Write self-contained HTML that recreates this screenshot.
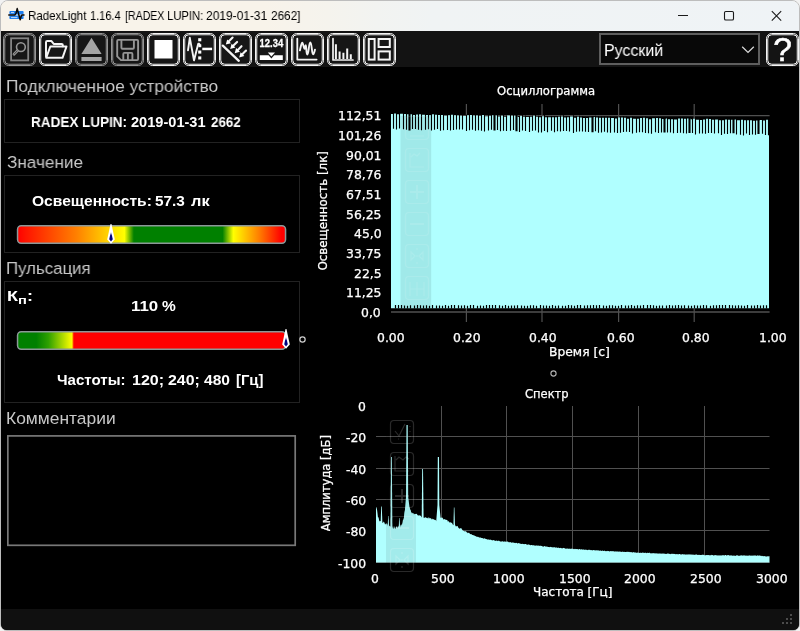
<!DOCTYPE html>
<html lang="ru">
<head>
<meta charset="utf-8">
<title>RadexLight 1.16.4 [RADEX LUPIN: 2019-01-31 2662]</title>
<style>
html,body{margin:0;padding:0;background:#f2f2f2;}
body{width:800px;height:631px;overflow:hidden;position:relative;font-family:"Liberation Sans",sans-serif;}
#win{position:absolute;left:0;top:0;width:798px;height:629px;border:1px solid #bdbdbd;border-radius:8px 8px 7px 7px;overflow:hidden;background:linear-gradient(180deg,#f8f3ea 0,#f8f3ea 30px,#000 30px,#000 100%);}
#inner{position:absolute;left:-1px;top:-1px;width:800px;height:631px;}
.abs{position:absolute;}
svg{will-change:transform;}
.c{-webkit-text-stroke:0.25px #fff;}
.t{position:absolute;white-space:nowrap;transform-origin:0 50%;display:inline-block;will-change:transform;}
#titlebar{position:absolute;left:0;top:0;width:800px;height:31px;background:linear-gradient(90deg,#f8f3ea 0%,#f8f3ea 33%,#f5f3ed 41%,#f2f3f1 47%,#f0f3f4 54%,#eff3f6 100%);}
#toolbar{position:absolute;left:0;top:31px;width:800px;height:36px;background:#131313;}
.tb{position:absolute;}
.box{position:absolute;box-sizing:border-box;border:1px solid #222;}
.bar{position:absolute;box-sizing:border-box;border:1px solid #8a8a8a;border-radius:4px;}
#status{position:absolute;left:0;top:609px;width:800px;height:22px;background:#101010;}
.dot{position:absolute;width:2px;height:2px;background:#4c4c4c;}
</style>
</head>
<body>
<div id="win"><div id="inner">

<div id="titlebar">
<svg class="abs" style="left:8px;top:7px" width="18" height="16" viewBox="8 7 18 16">
<rect x="9.4" y="11.1" width="14.2" height="3" rx="0.8" fill="#1b7df0"/>
<rect x="9.4" y="15.9" width="14.2" height="3.2" rx="0.8" fill="#1b7df0"/>
<rect x="9.4" y="13.6" width="14.2" height="3" fill="#3d8ff0" opacity="0.55"/>
<path d="M11 12.6 H14 M11 17.6 H17.4" stroke="#d6e8ff" stroke-width="0.9"/>
<path d="M8.8 15 H14.8 L16 13.4 L17.2 8.6 L18.6 14 L20.2 19.8 L21.4 15.6 L22 15 H24" fill="none" stroke="#0a0a0a" stroke-width="1.5" stroke-linejoin="round" stroke-linecap="round"/>
</svg>
<svg class="abs" style="left:670px;top:5px" width="124" height="22" viewBox="0 0 124 22">
<path d="M8 10.5 H18" stroke="#1a1a1a" stroke-width="1"/>
<rect x="54.5" y="6.5" width="9" height="8.5" rx="1.3" fill="none" stroke="#1a1a1a" stroke-width="1.1"/>
<path d="M101.8 6.2 L111.2 15.6 M111.2 6.2 L101.8 15.6" stroke="#1a1a1a" stroke-width="1.1"/>
</svg>
</div>

<div id="toolbar"></div>
<svg class="tb" style="left:3px;top:33px" width="33" height="33" viewBox="0 0 33 33"><rect x="0.5" y="0.5" width="32" height="32" rx="5.2" fill="#161616" stroke="#969696" stroke-width="1"/><rect x="1.75" y="1.75" width="29.5" height="29.5" rx="4" fill="none" stroke="#969696" stroke-width="1"/><g stroke="#969696" fill="none" stroke-width="1.6" stroke-linecap="round" stroke-linejoin="round"><rect x="8.1" y="5.3" width="17.1" height="22.1" stroke-width="1.8" stroke="#848484" stroke-linejoin="miter"/><circle cx="17.9" cy="14.1" r="4.4" stroke-width="1.6"/><path d="M14.4 17.7 L11 21.3" stroke-width="2.7"/><path d="M14.2 17.9 L11.2 21.1" stroke-width="0.9" stroke="#3a3a3a"/></g></svg>
<svg class="tb" style="left:39px;top:33px" width="33" height="33" viewBox="0 0 33 33"><rect x="0.5" y="0.5" width="32" height="32" rx="5.2" fill="#161616" stroke="#f4f4f4" stroke-width="1"/><rect x="1.75" y="1.75" width="29.5" height="29.5" rx="4" fill="none" stroke="#f4f4f4" stroke-width="1"/><g stroke="#f4f4f4" fill="none" stroke-width="1.6" stroke-linecap="round" stroke-linejoin="round"><path d="M7 23.6 V9.3 Q7 8.1 8.2 8.1 H12.5 L14.7 10.9 H22.6 Q23.8 10.9 23.8 12.1 V13.2" stroke-width="2"/><path d="M7.2 24.8 L11.3 13.5 H27.5 L23.5 24.8 Z" stroke-width="2"/></g></svg>
<svg class="tb" style="left:75px;top:33px" width="33" height="33" viewBox="0 0 33 33"><rect x="0.5" y="0.5" width="32" height="32" rx="5.2" fill="#161616" stroke="#969696" stroke-width="1"/><rect x="1.75" y="1.75" width="29.5" height="29.5" rx="4" fill="none" stroke="#969696" stroke-width="1"/><g stroke="#969696" fill="none" stroke-width="1.6" stroke-linecap="round" stroke-linejoin="round"><path d="M16.5 4.8 L26.6 21 H6.4 Z" fill="#a4a4a4" stroke="none"/><rect x="6.4" y="24" width="20.2" height="4" fill="#a4a4a4" stroke="none"/></g></svg>
<svg class="tb" style="left:111px;top:33px" width="33" height="33" viewBox="0 0 33 33"><rect x="0.5" y="0.5" width="32" height="32" rx="5.2" fill="#161616" stroke="#969696" stroke-width="1"/><rect x="1.75" y="1.75" width="29.5" height="29.5" rx="4" fill="none" stroke="#969696" stroke-width="1"/><g stroke="#969696" fill="none" stroke-width="1.6" stroke-linecap="round" stroke-linejoin="round"><path d="M7.2 6.9 H26.1 Q27.1 6.9 27.1 7.9 V26.1 Q27.1 27.1 26.1 27.1 H10 L6.2 23.4 V7.9 Q6.2 6.9 7.2 6.9 Z" stroke-width="1.9"/><path d="M10.4 7.4 V14.7 Q10.4 15.7 11.4 15.7 H21.9 Q22.9 15.7 22.9 14.7 V7.4" stroke-width="1.9"/><path d="M12.3 26.6 V20.9 Q12.3 19.9 13.3 19.9 H20.4 Q21.4 19.9 21.4 20.9 V26.6 M16.9 21 V26.4" stroke-width="1.9"/></g></svg>
<svg class="tb" style="left:147px;top:33px" width="33" height="33" viewBox="0 0 33 33"><rect x="0.5" y="0.5" width="32" height="32" rx="5.2" fill="#161616" stroke="#f4f4f4" stroke-width="1"/><rect x="1.75" y="1.75" width="29.5" height="29.5" rx="4" fill="none" stroke="#f4f4f4" stroke-width="1"/><g stroke="#f4f4f4" fill="none" stroke-width="1.6" stroke-linecap="round" stroke-linejoin="round"><rect x="7.5" y="7" width="18" height="18.5" fill="#fff" stroke="none"/></g></svg>
<svg class="tb" style="left:183px;top:33px" width="33" height="33" viewBox="0 0 33 33"><rect x="0.5" y="0.5" width="32" height="32" rx="5.2" fill="#161616" stroke="#f4f4f4" stroke-width="1"/><rect x="1.75" y="1.75" width="29.5" height="29.5" rx="4" fill="none" stroke="#f4f4f4" stroke-width="1"/><g stroke="#f4f4f4" fill="none" stroke-width="1.6" stroke-linecap="round" stroke-linejoin="round"><path d="M5 17.3 L6.8 4.8 L11 27.4 L15.1 11.2 Q15.9 9.6 17 12.2" stroke-width="1.9"/><g fill="#fff" stroke="none"><rect x="15.2" y="5.2" width="3.1" height="3.1"/><rect x="15.4" y="11.4" width="2.9" height="2.8"/><rect x="15.2" y="17.5" width="3.1" height="3.1"/><rect x="15.2" y="23.4" width="3.1" height="3.1"/><rect x="19.3" y="14.7" width="9.8" height="2.5"/></g></g></svg>
<svg class="tb" style="left:219px;top:33px" width="33" height="33" viewBox="0 0 33 33"><rect x="0.5" y="0.5" width="32" height="32" rx="5.2" fill="#161616" stroke="#f4f4f4" stroke-width="1"/><rect x="1.75" y="1.75" width="29.5" height="29.5" rx="4" fill="none" stroke="#f4f4f4" stroke-width="1"/><g stroke="#f4f4f4" fill="none" stroke-width="1.6" stroke-linecap="round" stroke-linejoin="round"><path d="M3.8 12.6 L19.8 27.8" stroke-width="2.3"/><path d="M13.6 4.6 L9.4 8.8" stroke-width="2.1"/><path d="M6.8 11.6 L8.2 6.4 L12.0 10.2 Z" fill="#fff" stroke="none"/><path d="M18.1 8.9 L13.9 13.1" stroke-width="2.1"/><path d="M11.2 15.9 L12.6 10.7 L16.4 14.5 Z" fill="#fff" stroke="none"/><path d="M22.5 13.2 L18.3 17.4" stroke-width="2.1"/><path d="M15.7 20.2 L17.1 15.0 L20.9 18.8 Z" fill="#fff" stroke="none"/><path d="M27.0 17.5 L22.8 21.7" stroke-width="2.1"/><path d="M20.2 24.5 L21.6 19.3 L25.4 23.1 Z" fill="#fff" stroke="none"/></g></svg>
<svg class="tb" style="left:255px;top:33px" width="33" height="33" viewBox="0 0 33 33"><rect x="0.5" y="0.5" width="32" height="32" rx="5.2" fill="#161616" stroke="#f4f4f4" stroke-width="1"/><rect x="1.75" y="1.75" width="29.5" height="29.5" rx="4" fill="none" stroke="#f4f4f4" stroke-width="1"/><g stroke="#f4f4f4" fill="none" stroke-width="1.6" stroke-linecap="round" stroke-linejoin="round"><text x="16.4" y="13.8" text-anchor="middle" font-family="'Liberation Sans', sans-serif" font-weight="700" font-size="10" fill="#fff" stroke="#fff" stroke-width="0.3" textLength="23.6" lengthAdjust="spacingAndGlyphs">12.34</text><path d="M4.8 22.3 H27.8 V27 H4.8 Z M13.6 22.3 L16.4 25.4 L19.2 22.3 Z" fill="#fff" fill-rule="evenodd" stroke="none"/><path d="M12.8 19.6 H20 L16.4 23.4 Z" fill="#fff" stroke="none"/></g></svg>
<svg class="tb" style="left:291px;top:33px" width="33" height="33" viewBox="0 0 33 33"><rect x="0.5" y="0.5" width="32" height="32" rx="5.2" fill="#161616" stroke="#f4f4f4" stroke-width="1"/><rect x="1.75" y="1.75" width="29.5" height="29.5" rx="4" fill="none" stroke="#f4f4f4" stroke-width="1"/><g stroke="#f4f4f4" fill="none" stroke-width="1.6" stroke-linecap="round" stroke-linejoin="round"><path d="M6.3 5.6 V26.6 H25.6" stroke-width="1.8"/><path d="M8.9 17.4 C9.8 14 10.4 9.6 11.3 9.6 C12.2 9.6 12.7 15.8 13.5 15.8 C14.1 15.8 14.1 12.2 14.7 12.2 C15.6 12.2 15 21.6 16.3 21.6 C17.8 21.6 17.7 9.4 19.3 9.4 C20.9 9.4 20.7 21.2 22.1 21.2 C23 21.2 23.5 18.4 24 16.6" stroke-width="1.9"/></g></svg>
<svg class="tb" style="left:327px;top:33px" width="33" height="33" viewBox="0 0 33 33"><rect x="0.5" y="0.5" width="32" height="32" rx="5.2" fill="#161616" stroke="#f4f4f4" stroke-width="1"/><rect x="1.75" y="1.75" width="29.5" height="29.5" rx="4" fill="none" stroke="#f4f4f4" stroke-width="1"/><g stroke="#f4f4f4" fill="none" stroke-width="1.6" stroke-linecap="round" stroke-linejoin="round"><path d="M6 5.6 V27 H26" stroke-width="1.7"/><path d="M8.9 11.3 V26 M12.6 18.4 V26 M16.4 19.8 V26 M20.2 15.5 V26 M23.8 21.3 V26" stroke-width="2" stroke-linecap="butt"/></g></svg>
<svg class="tb" style="left:363px;top:33px" width="33" height="33" viewBox="0 0 33 33"><rect x="0.5" y="0.5" width="32" height="32" rx="5.2" fill="#161616" stroke="#f4f4f4" stroke-width="1"/><rect x="1.75" y="1.75" width="29.5" height="29.5" rx="4" fill="none" stroke="#f4f4f4" stroke-width="1"/><g stroke="#f4f4f4" fill="none" stroke-width="1.6" stroke-linecap="round" stroke-linejoin="round"><g stroke-width="2" stroke-linejoin="miter"><rect x="5.8" y="6" width="5.8" height="20.6"/><rect x="15.6" y="6" width="11.2" height="8"/><rect x="15.6" y="18.4" width="11.2" height="8.2"/></g></g></svg>
<div class="abs" style="left:599px;top:33px;width:161px;height:32px;box-sizing:border-box;border:2px solid #5e5e5e;background:#080808"></div>
<svg class="abs" style="left:740.4px;top:43.6px" width="16" height="11" viewBox="0 0 16 11"><path d="M2.2 2.8 L8 8.4 L13.8 2.8" fill="none" stroke="#d8d8d8" stroke-width="1.3"/></svg>
<svg class="abs" style="left:765.6px;top:33px" width="33" height="33" viewBox="0 0 33 33">
<rect x="0.5" y="0.5" width="32" height="32" rx="5.2" fill="#141414" stroke="#f4f4f4"/>
<rect x="1.75" y="1.75" width="29.5" height="29.5" rx="4" fill="none" stroke="#f4f4f4"/>
<text x="16.6" y="28.2" text-anchor="middle" font-family="'Liberation Sans', sans-serif" font-size="33.5" fill="#fff" stroke="#fff" stroke-width="0.5">?</text>
</svg>

<div class="box" style="left:4px;top:99px;width:296px;height:44px"></div>
<div class="box" style="left:4px;top:175px;width:296px;height:78px"></div>
<div class="box" style="left:4px;top:281px;width:296px;height:122px"></div>

<svg class="abs" style="left:16px;top:224px" width="272" height="21" viewBox="0 0 272 21"><defs><linearGradient id="g1" x1="0" y1="0" x2="1" y2="0"><stop offset="0" stop-color="#ff0000"/><stop offset="0.03" stop-color="#ff1400"/><stop offset="0.22" stop-color="#ff8000"/><stop offset="0.399" stop-color="#ffff00"/><stop offset="0.434" stop-color="#008000"/><stop offset="0.765" stop-color="#008000"/><stop offset="0.805" stop-color="#ffff00"/><stop offset="0.9" stop-color="#ff8000"/><stop offset="0.985" stop-color="#ff0000"/></linearGradient></defs><rect x="1.55" y="1.85" width="268" height="17.3" rx="3.6" fill="url(#g1)" stroke="#8c9898" stroke-width="1.5"/></svg>
<svg class="abs" style="left:106.3px;top:223.5px" width="10" height="21" viewBox="0 0 10 21"><defs><linearGradient id="mk111" x1="0" y1="0" x2="0" y2="1"><stop offset="0" stop-color="#ffffff"/><stop offset="0.35" stop-color="#000080"/><stop offset="1" stop-color="#000080"/></linearGradient></defs><path d="M4.55 0 L5.45 0 L8.8 15.4 L5 19.8 L1.2 15.4 Z" fill="#fff"/><path d="M5 7.6 L6.8 15.2 L5 17.4 L3.2 15.2 Z" fill="url(#mk111)"/></svg>
<svg class="abs" style="left:16px;top:330px" width="272" height="21" viewBox="0 0 272 21"><defs><linearGradient id="g2" x1="0" y1="0" x2="1" y2="0"><stop offset="0" stop-color="#008000"/><stop offset="0.07" stop-color="#008000"/><stop offset="0.115" stop-color="#2ea000"/><stop offset="0.203" stop-color="#ffff00"/><stop offset="0.21" stop-color="#ff0000"/><stop offset="1" stop-color="#ff0000"/></linearGradient></defs><rect x="1.55" y="1.85" width="268" height="17.3" rx="3.6" fill="url(#g2)" stroke="#8c9898" stroke-width="1.5"/></svg>
<svg class="abs" style="left:281.3px;top:329.2px" width="10" height="21" viewBox="0 0 10 21"><defs><linearGradient id="mk286" x1="0" y1="0" x2="0" y2="1"><stop offset="0" stop-color="#ffffff"/><stop offset="0.35" stop-color="#000080"/><stop offset="1" stop-color="#000080"/></linearGradient></defs><path d="M4.55 0 L5.45 0 L8.8 15.4 L5 19.8 L1.2 15.4 Z" fill="#fff"/><path d="M5 7.6 L6.8 15.2 L5 17.4 L3.2 15.2 Z" fill="url(#mk286)"/></svg>
<svg class="abs" style="left:298.1px;top:335.3px" width="9" height="9" viewBox="0 0 9 9"><circle cx="4.5" cy="4.5" r="2.65" fill="#000" stroke="#d0d0d0" stroke-width="1.2"/></svg>
<svg class="abs" style="left:548.5px;top:369px" width="9" height="9" viewBox="0 0 9 9"><circle cx="4.5" cy="4.5" r="2.6" fill="#000" stroke="#b4b4b4" stroke-width="1.1"/></svg>

<svg class="abs" style="left:0;top:430px" width="304" height="122" viewBox="0 430 304 122"><rect x="7.85" y="435.9" width="287.35" height="109.4" fill="#000" stroke="#787878" stroke-width="1.7"/></svg>

<svg class="abs" style="left:0;top:67px" width="800" height="542" viewBox="0 67 800 542">
<path d="M391 115.6 H769.6 M391 312 H769.6" stroke="#505050" stroke-width="1.3"/>
<path d="M466.4 104 V322" stroke="#505050" stroke-width="1.2"/>
<path d="M542.0 104 V322" stroke="#505050" stroke-width="1.2"/>
<path d="M618.6 104 V322" stroke="#505050" stroke-width="1.2"/>
<path d="M694.2 104 V322" stroke="#505050" stroke-width="1.2"/>
<path d="M391.00 308.3 L391.00 113.90 L394.06 113.90 L394.06 113.60 L397.06 113.60 L397.06 114.26 L400.06 114.26 L400.06 113.73 L404.06 113.73 L404.06 113.97 L407.06 113.97 L407.06 114.26 L410.55 114.26 L410.55 114.16 L413.06 114.16 L413.06 114.95 L416.06 114.95 L416.06 114.38 L419.06 114.38 L419.06 114.20 L422.06 114.20 L422.06 114.79 L426.06 114.79 L426.06 115.00 L429.06 115.00 L429.06 115.30 L432.06 115.30 L432.06 114.29 L435.06 114.29 L435.06 114.86 L438.06 114.86 L438.06 115.03 L441.06 115.03 L441.06 115.11 L444.06 115.11 L444.06 115.66 L448.06 115.66 L448.06 115.37 L451.06 115.37 L451.06 114.84 L454.06 114.84 L454.06 115.14 L457.06 115.14 L457.06 115.62 L460.06 115.62 L460.06 115.82 L463.06 115.82 L463.06 115.89 L467.06 115.89 L467.06 115.28 L470.06 115.28 L470.06 114.97 L473.06 114.97 L473.06 115.49 L476.06 115.49 L476.06 115.45 L479.06 115.45 L479.06 115.88 L482.06 115.88 L482.06 115.04 L485.06 115.04 L485.06 116.13 L489.06 116.13 L489.06 115.96 L492.06 115.96 L492.06 115.35 L495.55 115.35 L495.55 115.39 L498.06 115.39 L498.06 116.45 L501.06 116.45 L501.06 115.77 L504.06 115.77 L504.06 116.72 L507.06 116.72 L507.06 115.53 L511.06 115.53 L511.06 115.66 L514.06 115.66 L514.06 115.70 L517.55 115.70 L517.55 116.91 L520.06 116.91 L520.06 116.11 L523.06 116.11 L523.06 116.74 L526.06 116.74 L526.06 117.08 L530.06 117.08 L530.06 116.79 L533.06 116.79 L533.06 115.85 L536.06 115.85 L536.06 116.83 L539.06 116.83 L539.06 117.29 L542.06 117.29 L542.06 116.28 L545.06 116.28 L545.06 117.28 L548.06 117.28 L548.06 117.19 L552.06 117.19 L552.06 117.22 L555.06 117.22 L555.06 117.28 L558.06 117.28 L558.06 116.78 L561.06 116.78 L561.06 116.52 L564.06 116.52 L564.06 117.46 L567.06 117.46 L567.06 117.30 L570.06 117.30 L570.06 116.45 L574.06 116.45 L574.06 117.79 L577.06 117.79 L577.06 116.84 L580.06 116.84 L580.06 117.41 L583.06 117.41 L583.06 117.92 L586.06 117.92 L586.06 117.96 L589.06 117.96 L589.06 117.49 L593.55 117.49 L593.55 117.06 L596.06 117.06 L596.06 117.52 L599.06 117.52 L599.06 117.63 L602.06 117.63 L602.06 117.74 L605.06 117.74 L605.06 117.72 L608.06 117.72 L608.06 117.69 L611.06 117.69 L611.06 118.09 L615.06 118.09 L615.06 118.49 L618.06 118.49 L618.06 117.59 L621.06 117.59 L621.06 117.47 L624.06 117.47 L624.06 117.66 L627.06 117.66 L627.06 118.64 L630.06 118.64 L630.06 117.63 L633.06 117.63 L633.06 118.82 L637.06 118.82 L637.06 118.70 L640.06 118.70 L640.06 118.06 L643.06 118.06 L643.06 117.67 L646.06 117.67 L646.06 118.16 L649.06 118.16 L649.06 119.13 L652.06 119.13 L652.06 118.17 L656.06 118.17 L656.06 118.03 L659.06 118.03 L659.06 118.27 L662.06 118.27 L662.06 118.94 L665.55 118.94 L665.55 118.61 L668.06 118.61 L668.06 119.18 L671.06 119.18 L671.06 119.32 L674.06 119.32 L674.06 119.46 L678.06 119.46 L678.06 118.55 L681.06 118.55 L681.06 118.55 L684.06 118.55 L684.06 118.73 L687.06 118.73 L687.06 118.40 L690.55 118.40 L690.55 119.20 L693.06 119.20 L693.06 118.63 L696.06 118.63 L696.06 119.70 L700.06 119.70 L700.06 119.96 L703.06 119.96 L703.06 119.53 L706.06 119.53 L706.06 118.87 L709.06 118.87 L709.06 118.97 L712.06 118.97 L712.06 119.74 L715.06 119.74 L715.06 119.49 L719.06 119.49 L719.06 120.25 L722.06 120.25 L722.06 120.31 L725.06 120.31 L725.06 119.54 L728.06 119.54 L728.06 119.77 L731.06 119.77 L731.06 119.67 L734.55 119.67 L734.55 119.49 L737.06 119.49 L737.06 120.14 L741.06 120.14 L741.06 119.73 L744.06 119.73 L744.06 120.22 L747.06 120.22 L747.06 120.25 L750.06 120.25 L750.06 120.16 L753.06 120.16 L753.06 120.64 L756.06 120.64 L756.06 120.50 L759.55 120.50 L759.55 120.09 L763.06 120.09 L763.06 120.52 L766.06 120.52 L766.06 119.69 L769.00 119.69 L769.00 120.45 L769.00 120.45 L769.00 308.3 Z" fill="#b0ffff"/>
<path d="M392.94 112.70 V128.65 H394.06 V112.70 Z M395.94 112.40 V129.51 H397.06 V112.40 Z M398.94 113.06 V128.51 H400.06 V113.06 Z M402.94 112.53 V129.36 H404.06 V112.53 Z M405.94 112.77 V129.83 H407.06 V112.77 Z M408.45 113.06 V130.61 H410.55 V113.06 Z M411.94 112.96 V128.91 H413.06 V112.96 Z M414.94 113.75 V129.03 H416.06 V113.75 Z M417.94 113.18 V129.85 H419.06 V113.18 Z M420.94 113.00 V130.17 H422.06 V113.00 Z M424.94 113.59 V129.74 H426.06 V113.59 Z M427.94 113.80 V129.34 H429.06 V113.80 Z M430.94 114.10 V130.41 H432.06 V114.10 Z M433.94 113.09 V129.80 H435.06 V113.09 Z M436.94 113.66 V129.05 H438.06 V113.66 Z M439.94 113.83 V130.85 H441.06 V113.83 Z M442.94 113.91 V130.27 H444.06 V113.91 Z M446.94 114.46 V130.10 H448.06 V114.46 Z M449.94 114.17 V130.51 H451.06 V114.17 Z M452.94 113.64 V130.00 H454.06 V113.64 Z M455.94 113.94 V129.59 H457.06 V113.94 Z M458.94 114.42 V129.55 H460.06 V114.42 Z M461.94 114.62 V129.50 H463.06 V114.62 Z M465.94 114.69 V131.09 H467.06 V114.69 Z M468.94 114.08 V130.17 H470.06 V114.08 Z M471.94 113.77 V129.83 H473.06 V113.77 Z M474.94 114.29 V130.74 H476.06 V114.29 Z M477.94 114.25 V130.33 H479.06 V114.25 Z M480.94 114.68 V130.68 H482.06 V114.68 Z M483.94 113.84 V131.53 H485.06 V113.84 Z M487.94 114.93 V130.51 H489.06 V114.93 Z M490.94 114.76 V129.86 H492.06 V114.76 Z M493.45 114.15 V130.49 H495.55 V114.15 Z M496.94 114.19 V130.03 H498.06 V114.19 Z M499.94 115.25 V131.16 H501.06 V115.25 Z M502.94 114.57 V130.68 H504.06 V114.57 Z M505.94 115.52 V130.94 H507.06 V115.52 Z M509.94 114.33 V130.72 H511.06 V114.33 Z M512.94 114.46 V130.09 H514.06 V114.46 Z M515.45 114.50 V131.23 H517.55 V114.50 Z M518.94 115.71 V131.95 H520.06 V115.71 Z M521.94 114.91 V130.53 H523.06 V114.91 Z M524.94 115.54 V130.92 H526.06 V115.54 Z M528.94 115.88 V132.06 H530.06 V115.88 Z M531.94 115.59 V130.79 H533.06 V115.59 Z M534.94 114.65 V130.42 H536.06 V114.65 Z M537.94 115.63 V132.42 H539.06 V115.63 Z M540.94 116.09 V132.46 H542.06 V116.09 Z M543.94 115.08 V130.91 H545.06 V115.08 Z M546.94 116.08 V132.31 H548.06 V116.08 Z M550.94 115.99 V130.76 H552.06 V115.99 Z M553.94 116.02 V132.21 H555.06 V116.02 Z M556.94 116.08 V131.37 H558.06 V116.08 Z M559.94 115.58 V131.56 H561.06 V115.58 Z M562.94 115.32 V131.03 H564.06 V115.32 Z M565.94 116.26 V131.12 H567.06 V116.26 Z M568.94 116.10 V131.59 H570.06 V116.10 Z M572.94 115.25 V132.94 H574.06 V115.25 Z M575.94 116.59 V131.86 H577.06 V116.59 Z M578.94 115.64 V131.52 H580.06 V115.64 Z M581.94 116.21 V131.58 H583.06 V116.21 Z M584.94 116.72 V131.82 H586.06 V116.72 Z M587.94 116.76 V132.01 H589.06 V116.76 Z M591.45 116.29 V132.27 H593.55 V116.29 Z M594.94 115.86 V131.22 H596.06 V115.86 Z M597.94 116.32 V132.78 H599.06 V116.32 Z M600.94 116.43 V132.47 H602.06 V116.43 Z M603.94 116.54 V131.87 H605.06 V116.54 Z M606.94 116.52 V132.58 H608.06 V116.52 Z M609.94 116.49 V132.73 H611.06 V116.49 Z M613.94 116.89 V132.44 H615.06 V116.89 Z M616.94 117.29 V133.00 H618.06 V117.29 Z M619.94 116.39 V132.75 H621.06 V116.39 Z M622.94 116.27 V131.88 H624.06 V116.27 Z M625.94 116.46 V131.82 H627.06 V116.46 Z M628.94 117.44 V132.04 H630.06 V117.44 Z M631.94 116.43 V133.61 H633.06 V116.43 Z M635.94 117.62 V132.64 H637.06 V117.62 Z M638.94 117.50 V132.19 H640.06 V117.50 Z M641.94 116.86 V132.30 H643.06 V116.86 Z M644.94 116.47 V133.10 H646.06 V116.47 Z M647.94 116.96 V133.29 H649.06 V116.96 Z M650.94 117.93 V133.68 H652.06 V117.93 Z M654.94 116.97 V132.15 H656.06 V116.97 Z M657.94 116.83 V133.00 H659.06 V116.83 Z M660.94 117.07 V132.48 H662.06 V117.07 Z M663.45 117.74 V132.39 H665.55 V117.74 Z M666.94 117.41 V132.40 H668.06 V117.41 Z M669.94 117.98 V132.47 H671.06 V117.98 Z M672.94 118.12 V133.29 H674.06 V118.12 Z M676.94 118.26 V132.95 H678.06 V118.26 Z M679.94 117.35 V132.66 H681.06 V117.35 Z M682.94 117.35 V133.13 H684.06 V117.35 Z M685.94 117.53 V133.57 H687.06 V117.53 Z M688.45 117.20 V133.09 H690.55 V117.20 Z M691.94 118.00 V133.01 H693.06 V118.00 Z M694.94 117.43 V134.38 H696.06 V117.43 Z M698.94 118.50 V133.53 H700.06 V118.50 Z M701.94 118.76 V133.47 H703.06 V118.76 Z M704.94 118.33 V133.64 H706.06 V118.33 Z M707.94 117.67 V132.98 H709.06 V117.67 Z M710.94 117.77 V133.06 H712.06 V117.77 Z M713.94 118.54 V133.52 H715.06 V118.54 Z M717.94 118.29 V133.30 H719.06 V118.29 Z M720.94 119.05 V135.06 H722.06 V119.05 Z M723.94 119.11 V133.71 H725.06 V119.11 Z M726.94 118.34 V134.10 H728.06 V118.34 Z M729.94 118.57 V133.16 H731.06 V118.57 Z M732.45 118.47 V133.28 H734.55 V118.47 Z M735.94 118.29 V134.47 H737.06 V118.29 Z M739.94 118.94 V134.79 H741.06 V118.94 Z M742.94 118.53 V135.40 H744.06 V118.53 Z M745.94 119.02 V133.47 H747.06 V119.02 Z M748.94 119.05 V134.96 H750.06 V119.05 Z M751.94 118.96 V134.53 H753.06 V118.96 Z M754.94 119.44 V134.74 H756.06 V119.44 Z M757.45 119.30 V134.04 H759.55 V119.30 Z M761.94 118.89 V133.82 H763.06 V118.89 Z M764.94 119.32 V134.96 H766.06 V119.32 Z M767.94 118.49 V135.37 H769.06 V118.49 Z" fill="#000"/>
<path d="M394.90 308.6 V304.95 H396.10 V308.6 Z M397.90 308.6 V304.96 H399.10 V308.6 Z M400.90 308.6 V305.01 H402.10 V308.6 Z M403.90 308.6 V305.42 H405.10 V308.6 Z M406.90 308.6 V305.67 H408.10 V308.6 Z M409.90 308.6 V305.18 H411.10 V308.6 Z M413.90 308.6 V305.48 H415.10 V308.6 Z M416.90 308.6 V304.95 H418.10 V308.6 Z M419.90 308.6 V305.18 H421.10 V308.6 Z M422.90 308.6 V305.61 H424.10 V308.6 Z M425.90 308.6 V305.37 H427.10 V308.6 Z M428.90 308.6 V305.78 H430.10 V308.6 Z M431.90 308.6 V305.04 H433.10 V308.6 Z M435.90 308.6 V305.59 H437.10 V308.6 Z M438.90 308.6 V305.53 H440.10 V308.6 Z M441.90 308.6 V305.66 H443.10 V308.6 Z M444.90 308.6 V304.95 H446.10 V308.6 Z M447.90 308.6 V305.64 H449.10 V308.6 Z M450.90 308.6 V304.92 H452.10 V308.6 Z M453.90 308.6 V304.95 H455.10 V308.6 Z M457.90 308.6 V305.25 H459.10 V308.6 Z M460.90 308.6 V305.39 H462.10 V308.6 Z M463.90 308.6 V305.15 H465.10 V308.6 Z M466.90 308.6 V305.76 H468.10 V308.6 Z M469.90 308.6 V305.11 H471.10 V308.6 Z M472.90 308.6 V304.90 H474.10 V308.6 Z M476.90 308.6 V305.76 H478.10 V308.6 Z M479.90 308.6 V305.51 H481.10 V308.6 Z M482.90 308.6 V305.69 H484.10 V308.6 Z M485.90 308.6 V304.99 H487.10 V308.6 Z M488.90 308.6 V305.09 H490.10 V308.6 Z M491.90 308.6 V304.90 H493.10 V308.6 Z M494.90 308.6 V304.92 H496.10 V308.6 Z M498.90 308.6 V305.13 H500.10 V308.6 Z M501.90 308.6 V305.66 H503.10 V308.6 Z M504.90 308.6 V304.98 H506.10 V308.6 Z M507.90 308.6 V305.65 H509.10 V308.6 Z M510.90 308.6 V305.38 H512.10 V308.6 Z M513.90 308.6 V305.38 H515.10 V308.6 Z M516.90 308.6 V305.14 H518.10 V308.6 Z M520.90 308.6 V305.38 H522.10 V308.6 Z M523.90 308.6 V305.63 H525.10 V308.6 Z M526.90 308.6 V305.64 H528.10 V308.6 Z M529.90 308.6 V305.22 H531.10 V308.6 Z M532.90 308.6 V305.13 H534.10 V308.6 Z M535.90 308.6 V305.74 H537.10 V308.6 Z M539.90 308.6 V305.10 H541.10 V308.6 Z M542.90 308.6 V305.46 H544.10 V308.6 Z M545.90 308.6 V305.49 H547.10 V308.6 Z M548.90 308.6 V305.72 H550.10 V308.6 Z M551.90 308.6 V305.06 H553.10 V308.6 Z M554.90 308.6 V305.77 H556.10 V308.6 Z M557.90 308.6 V305.55 H559.10 V308.6 Z M561.90 308.6 V305.71 H563.10 V308.6 Z M564.90 308.6 V305.78 H566.10 V308.6 Z M567.90 308.6 V305.02 H569.10 V308.6 Z M570.90 308.6 V305.37 H572.10 V308.6 Z M573.90 308.6 V305.64 H575.10 V308.6 Z M576.90 308.6 V305.12 H578.10 V308.6 Z M579.90 308.6 V305.02 H581.10 V308.6 Z M583.90 308.6 V305.43 H585.10 V308.6 Z M586.90 308.6 V305.35 H588.10 V308.6 Z M589.90 308.6 V305.30 H591.10 V308.6 Z M592.90 308.6 V305.06 H594.10 V308.6 Z M595.90 308.6 V305.19 H597.10 V308.6 Z M598.90 308.6 V305.00 H600.10 V308.6 Z M602.90 308.6 V305.60 H604.10 V308.6 Z M605.90 308.6 V305.72 H607.10 V308.6 Z M608.90 308.6 V305.36 H610.10 V308.6 Z M611.90 308.6 V305.33 H613.10 V308.6 Z M614.90 308.6 V305.75 H616.10 V308.6 Z M617.90 308.6 V305.66 H619.10 V308.6 Z M620.90 308.6 V304.97 H622.10 V308.6 Z M624.90 308.6 V305.61 H626.10 V308.6 Z M627.90 308.6 V305.49 H629.10 V308.6 Z M630.90 308.6 V305.10 H632.10 V308.6 Z M633.90 308.6 V305.79 H635.10 V308.6 Z M636.90 308.6 V305.36 H638.10 V308.6 Z M639.90 308.6 V305.55 H641.10 V308.6 Z M642.90 308.6 V304.92 H644.10 V308.6 Z M646.90 308.6 V304.96 H648.10 V308.6 Z M649.90 308.6 V304.99 H651.10 V308.6 Z M652.90 308.6 V305.14 H654.10 V308.6 Z M655.90 308.6 V305.64 H657.10 V308.6 Z M658.90 308.6 V305.41 H660.10 V308.6 Z M661.90 308.6 V305.52 H663.10 V308.6 Z M665.90 308.6 V305.47 H667.10 V308.6 Z M668.90 308.6 V304.96 H670.10 V308.6 Z M671.90 308.6 V305.40 H673.10 V308.6 Z M674.90 308.6 V305.37 H676.10 V308.6 Z M677.90 308.6 V304.95 H679.10 V308.6 Z M680.90 308.6 V305.58 H682.10 V308.6 Z M683.90 308.6 V305.21 H685.10 V308.6 Z M687.90 308.6 V305.56 H689.10 V308.6 Z M690.90 308.6 V305.74 H692.10 V308.6 Z M693.90 308.6 V305.35 H695.10 V308.6 Z M696.90 308.6 V305.52 H698.10 V308.6 Z M699.90 308.6 V305.54 H701.10 V308.6 Z M702.90 308.6 V304.95 H704.10 V308.6 Z M705.90 308.6 V305.13 H707.10 V308.6 Z M709.90 308.6 V305.68 H711.10 V308.6 Z M712.90 308.6 V305.16 H714.10 V308.6 Z M715.90 308.6 V305.14 H717.10 V308.6 Z M718.90 308.6 V305.12 H720.10 V308.6 Z M721.90 308.6 V304.90 H723.10 V308.6 Z M724.90 308.6 V305.08 H726.10 V308.6 Z M728.90 308.6 V304.98 H730.10 V308.6 Z M731.90 308.6 V305.17 H733.10 V308.6 Z M734.90 308.6 V305.58 H736.10 V308.6 Z M737.90 308.6 V305.25 H739.10 V308.6 Z M740.90 308.6 V305.55 H742.10 V308.6 Z M743.90 308.6 V305.70 H745.10 V308.6 Z M746.90 308.6 V305.03 H748.10 V308.6 Z M750.90 308.6 V305.62 H752.10 V308.6 Z M753.90 308.6 V305.51 H755.10 V308.6 Z M756.90 308.6 V305.02 H758.10 V308.6 Z M759.90 308.6 V305.40 H761.10 V308.6 Z M762.90 308.6 V305.34 H764.10 V308.6 Z M765.90 308.6 V305.35 H767.10 V308.6 Z" fill="#000"/>
<rect x="400.5" y="116" width="30.7" height="192" fill="#000" opacity="0.085"/>
<g fill="none" stroke="#fff" stroke-width="1.2" opacity="0.11"><rect x="405.5" y="116.5" width="23" height="23" rx="3.5"/><rect x="405.5" y="148.5" width="23" height="23" rx="3.5"/><rect x="405.5" y="180.5" width="23" height="23" rx="3.5"/><rect x="405.5" y="212.5" width="23" height="23" rx="3.5"/><rect x="405.5" y="244.5" width="23" height="23" rx="3.5"/><rect x="405.5" y="276.5" width="23" height="23" rx="3.5"/><path d="M410 136 H424"/><path d="M410 153 V167 H424 M411 157 L414 154 L417 156 L420 153"/><path d="M417 185 V199 M410 192 H424" stroke-width="2"/><path d="M410 224 H424" stroke-width="2"/><path d="M411 252 L415 256 L411 260 Z M423 252 L419 256 L423 260 Z M417 248 V250 M417 255 V257 M417 262 V264"/><path d="M410 282 V296 M424 282 V296 M410 289 H424 M417 282 V296"/></g>
<path d="M376 436.5 H769.5" stroke="#505050" stroke-width="1.1"/>
<path d="M376 468.5 H769.5" stroke="#505050" stroke-width="1.1"/>
<path d="M376 499.5 H769.5" stroke="#505050" stroke-width="1.1"/>
<path d="M376 530.5 H769.5" stroke="#505050" stroke-width="1.1"/>
<path d="M376 562.5 H769.5" stroke="#505050" stroke-width="1.1"/>
<path d="M441.5 406 V563" stroke="#505050"/>
<path d="M506.5 406 V563" stroke="#505050"/>
<path d="M572.5 406 V563" stroke="#505050"/>
<path d="M638.5 406 V563" stroke="#505050"/>
<path d="M704.5 406 V563" stroke="#505050"/>
<path d="M376.0 562.5 L376.0 506.8 L376.5 507.7 L377.0 509.6 L377.5 513.2 L378.0 517.7 L378.5 517.1 L379.0 519.8 L379.5 521.5 L380.0 521.0 L380.5 520.9 L381.0 521.4 L381.5 522.3 L382.0 522.9 L382.5 522.6 L383.0 523.0 L383.5 521.5 L384.0 522.0 L384.5 522.7 L385.0 524.6 L385.5 523.5 L386.0 524.7 L386.5 523.2 L387.0 523.6 L387.5 524.5 L388.0 526.1 L388.5 526.4 L389.0 526.6 L389.5 525.5 L390.0 526.4 L390.5 526.4 L391.0 526.6 L391.5 525.6 L392.0 528.3 L392.5 526.1 L393.0 528.7 L393.5 528.6 L394.0 525.7 L394.5 527.2 L395.0 528.4 L395.5 528.9 L396.0 527.3 L396.5 526.6 L397.0 526.3 L397.5 528.6 L398.0 526.1 L398.5 527.1 L399.0 525.6 L399.5 526.7 L400.0 527.9 L400.5 524.6 L401.0 526.0 L401.5 524.3 L402.0 524.7 L402.5 522.5 L403.0 519.4 L403.5 519.9 L404.0 517.0 L404.5 512.5 L405.0 510.1 L405.5 508.0 L406.0 507.6 L406.5 507.0 L407.0 506.4 L407.5 506.4 L408.0 506.0 L408.5 506.6 L409.0 506.4 L409.5 509.1 L410.0 510.6 L410.5 510.1 L411.0 512.3 L411.5 512.6 L412.0 513.7 L412.5 512.8 L413.0 513.1 L413.5 513.3 L414.0 514.6 L414.5 514.0 L415.0 513.7 L415.5 514.1 L416.0 514.0 L416.5 513.7 L417.0 514.0 L417.5 515.5 L418.0 514.7 L418.5 516.1 L419.0 515.0 L419.5 515.3 L420.0 515.9 L420.5 515.5 L421.0 516.0 L421.5 517.3 L422.0 517.3 L422.5 517.4 L423.0 517.2 L423.5 517.8 L424.0 518.0 L424.5 517.4 L425.0 517.8 L425.5 516.7 L426.0 518.0 L426.5 517.6 L427.0 518.3 L427.5 518.2 L428.0 517.6 L428.5 517.3 L429.0 519.0 L429.5 517.6 L430.0 518.3 L430.5 518.2 L431.0 518.2 L431.5 519.1 L432.0 519.7 L432.5 518.5 L433.0 519.3 L433.5 519.0 L434.0 519.8 L434.5 519.8 L435.0 519.7 L435.5 520.1 L436.0 520.5 L436.5 521.4 L437.0 520.4 L437.5 519.6 L438.0 520.5 L438.5 520.3 L439.0 519.0 L439.5 518.2 L440.0 517.9 L440.5 517.6 L441.0 518.0 L441.5 517.4 L442.0 517.5 L442.5 517.8 L443.0 518.6 L443.5 519.4 L444.0 519.4 L444.5 519.1 L445.0 519.3 L445.5 519.8 L446.0 519.8 L446.5 520.0 L447.0 519.7 L447.5 520.4 L448.0 521.9 L448.5 520.7 L449.0 521.7 L449.5 522.2 L450.0 523.0 L450.5 522.1 L451.0 522.5 L451.5 522.7 L452.0 523.3 L452.5 523.7 L453.0 524.9 L453.5 525.0 L454.0 525.3 L454.5 524.1 L455.0 524.4 L455.5 525.9 L456.0 526.5 L456.5 526.1 L457.0 526.6 L457.5 525.8 L458.0 526.8 L458.5 528.1 L459.0 528.2 L459.5 528.5 L460.0 529.1 L460.5 528.1 L461.0 528.1 L461.5 528.5 L462.0 529.5 L462.5 530.0 L463.0 530.8 L463.5 530.7 L464.0 530.9 L464.5 531.4 L465.0 531.1 L465.5 531.5 L466.0 530.9 L466.5 532.5 L467.0 531.8 L467.5 533.3 L468.0 533.1 L468.5 532.8 L469.0 532.7 L469.5 533.2 L470.0 533.9 L470.5 534.2 L471.0 534.0 L471.5 534.2 L472.0 534.7 L472.5 535.0 L473.0 535.1 L473.5 535.2 L474.0 535.6 L474.5 535.4 L475.0 535.9 L475.5 536.1 L476.0 536.6 L476.5 536.6 L477.0 536.9 L477.5 536.8 L478.0 536.8 L478.5 536.9 L479.0 537.6 L479.5 537.6 L480.0 537.5 L480.5 537.4 L481.0 537.8 L481.5 538.1 L482.0 538.0 L482.5 538.0 L483.0 538.4 L483.5 538.7 L484.0 538.3 L484.5 538.3 L485.0 538.7 L485.5 538.8 L486.0 539.1 L486.5 538.9 L487.0 539.4 L487.5 539.4 L488.0 539.4 L488.5 539.2 L489.0 539.9 L489.5 539.5 L490.0 539.9 L490.5 539.6 L491.0 539.7 L491.5 540.2 L492.0 539.9 L492.5 540.5 L493.0 540.2 L493.5 540.1 L494.0 540.2 L494.5 540.5 L495.0 540.7 L495.5 541.0 L496.0 540.5 L496.5 540.7 L497.0 540.6 L497.5 541.2 L498.0 540.7 L498.5 540.7 L499.0 540.7 L499.5 541.0 L500.0 541.4 L500.5 541.4 L501.0 541.4 L501.5 541.6 L502.0 541.6 L502.5 541.3 L503.0 541.2 L503.5 541.8 L504.0 541.7 L504.5 541.3 L505.0 541.8 L505.5 541.6 L506.0 541.7 L506.5 541.7 L507.0 541.6 L507.5 541.6 L508.0 541.8 L508.5 542.0 L509.0 542.4 L509.5 541.9 L510.0 542.6 L510.5 542.1 L511.0 542.3 L511.5 542.7 L512.0 542.7 L512.5 542.5 L513.0 542.3 L513.5 542.7 L514.0 542.7 L514.5 543.1 L515.0 542.7 L515.5 542.9 L516.0 543.3 L516.5 542.8 L517.0 543.1 L517.5 543.5 L518.0 543.5 L518.5 543.0 L519.0 543.1 L519.5 543.2 L520.0 543.9 L520.5 543.5 L521.0 543.9 L521.5 544.0 L522.0 543.7 L522.5 543.7 L523.0 544.3 L523.5 544.1 L524.0 543.9 L524.5 544.3 L525.0 544.1 L525.5 544.1 L526.0 544.0 L526.5 544.6 L527.0 544.8 L527.5 544.6 L528.0 544.9 L528.5 544.3 L529.0 544.6 L529.5 544.8 L530.0 545.2 L530.5 545.3 L531.0 544.9 L531.5 544.9 L532.0 545.1 L532.5 545.2 L533.0 545.5 L533.5 545.0 L534.0 545.5 L534.5 545.5 L535.0 545.6 L535.5 545.7 L536.0 545.6 L536.5 545.5 L537.0 545.5 L537.5 545.6 L538.0 545.9 L538.5 545.5 L539.0 545.6 L539.5 546.1 L540.0 545.8 L540.5 545.7 L541.0 545.7 L541.5 546.1 L542.0 546.0 L542.5 546.5 L543.0 546.5 L543.5 546.7 L544.0 546.2 L544.5 546.1 L545.0 546.2 L545.5 546.5 L546.0 546.7 L546.5 546.6 L547.0 546.5 L547.5 546.7 L548.0 546.9 L548.5 547.0 L549.0 547.1 L549.5 547.2 L550.0 547.1 L550.5 546.8 L551.0 547.3 L551.5 547.0 L552.0 547.3 L552.5 547.2 L553.0 547.5 L553.5 547.2 L554.0 547.2 L554.5 547.3 L555.0 547.3 L555.5 547.8 L556.0 547.6 L556.5 547.5 L557.0 547.6 L557.5 548.1 L558.0 547.8 L558.5 547.6 L559.0 548.0 L559.5 548.0 L560.0 548.3 L560.5 547.7 L561.0 548.0 L561.5 548.3 L562.0 548.3 L562.5 548.4 L563.0 547.8 L563.5 548.1 L564.0 548.0 L564.5 548.1 L565.0 548.7 L565.5 548.4 L566.0 548.7 L566.5 548.4 L567.0 548.8 L567.5 548.5 L568.0 548.4 L568.5 548.8 L569.0 549.0 L569.5 548.4 L570.0 548.8 L570.5 548.9 L571.0 548.6 L571.5 548.8 L572.0 548.7 L572.5 548.8 L573.0 548.8 L573.5 549.1 L574.0 549.2 L574.5 548.9 L575.0 548.8 L575.5 549.0 L576.0 549.3 L576.5 549.0 L577.0 549.1 L577.5 549.1 L578.0 549.5 L578.5 549.4 L579.0 549.1 L579.5 549.1 L580.0 549.3 L580.5 549.5 L581.0 549.6 L581.5 549.2 L582.0 549.3 L582.5 549.7 L583.0 549.5 L583.5 549.5 L584.0 549.5 L584.5 550.0 L585.0 549.6 L585.5 549.8 L586.0 549.7 L586.5 549.7 L587.0 550.1 L587.5 550.2 L588.0 549.8 L588.5 549.7 L589.0 550.1 L589.5 549.8 L590.0 549.7 L590.5 550.3 L591.0 550.0 L591.5 550.3 L592.0 550.1 L592.5 550.4 L593.0 550.2 L593.5 550.0 L594.0 549.9 L594.5 550.3 L595.0 550.4 L595.5 550.6 L596.0 550.1 L596.5 550.5 L597.0 550.3 L597.5 550.5 L598.0 550.2 L598.5 550.4 L599.0 550.6 L599.5 550.9 L600.0 550.3 L600.5 550.6 L601.0 550.9 L601.5 551.0 L602.0 550.5 L602.5 550.5 L603.0 551.1 L603.5 551.1 L604.0 550.8 L604.5 550.6 L605.0 551.2 L605.5 550.9 L606.0 551.2 L606.5 551.1 L607.0 551.2 L607.5 550.8 L608.0 551.3 L608.5 550.9 L609.0 551.1 L609.5 551.4 L610.0 551.4 L610.5 551.0 L611.0 551.1 L611.5 551.2 L612.0 551.3 L612.5 551.2 L613.0 551.1 L613.5 551.2 L614.0 551.6 L614.5 551.7 L615.0 551.1 L615.5 551.5 L616.0 551.7 L616.5 551.2 L617.0 551.8 L617.5 551.3 L618.0 551.7 L618.5 551.6 L619.0 551.7 L619.5 551.5 L620.0 551.6 L620.5 551.8 L621.0 551.7 L621.5 551.9 L622.0 551.7 L622.5 551.8 L623.0 551.5 L623.5 551.9 L624.0 551.9 L624.5 551.7 L625.0 552.1 L625.5 552.1 L626.0 551.9 L626.5 551.8 L627.0 552.0 L627.5 551.8 L628.0 551.8 L628.5 552.0 L629.0 551.8 L629.5 552.1 L630.0 552.2 L630.5 551.9 L631.0 552.3 L631.5 551.9 L632.0 552.4 L632.5 552.5 L633.0 552.3 L633.5 552.0 L634.0 552.4 L634.5 552.3 L635.0 552.7 L635.5 552.2 L636.0 552.7 L636.5 552.8 L637.0 552.7 L637.5 552.7 L638.0 552.3 L638.5 552.9 L639.0 552.6 L639.5 552.9 L640.0 552.9 L640.5 552.4 L641.0 552.9 L641.5 553.0 L642.0 552.4 L642.5 552.6 L643.0 552.9 L643.5 552.6 L644.0 553.1 L644.5 552.7 L645.0 553.1 L645.5 552.6 L646.0 552.9 L646.5 553.2 L647.0 552.7 L647.5 552.8 L648.0 553.0 L648.5 552.9 L649.0 552.7 L649.5 552.8 L650.0 552.8 L650.5 553.4 L651.0 553.2 L651.5 553.4 L652.0 552.9 L652.5 553.4 L653.0 552.9 L653.5 553.2 L654.0 553.3 L654.5 553.2 L655.0 553.5 L655.5 553.3 L656.0 553.4 L656.5 553.6 L657.0 553.1 L657.5 553.7 L658.0 553.5 L658.5 553.4 L659.0 553.7 L659.5 553.3 L660.0 553.8 L660.5 553.6 L661.0 553.4 L661.5 553.7 L662.0 553.5 L662.5 553.4 L663.0 553.8 L663.5 553.3 L664.0 553.9 L664.5 553.5 L665.0 553.8 L665.5 554.1 L666.0 553.8 L666.5 553.9 L667.0 553.7 L667.5 553.5 L668.0 553.5 L668.5 553.6 L669.0 554.0 L669.5 553.8 L670.0 553.9 L670.5 554.2 L671.0 553.7 L671.5 553.8 L672.0 554.1 L672.5 553.7 L673.0 553.7 L673.5 553.9 L674.0 553.8 L674.5 554.0 L675.0 553.9 L675.5 554.2 L676.0 554.2 L676.5 553.9 L677.0 554.2 L677.5 554.2 L678.0 553.9 L678.5 554.5 L679.0 554.0 L679.5 554.0 L680.0 554.0 L680.5 554.4 L681.0 554.5 L681.5 554.5 L682.0 554.2 L682.5 554.2 L683.0 554.0 L683.5 554.5 L684.0 554.4 L684.5 554.3 L685.0 554.5 L685.5 554.4 L686.0 554.7 L686.5 554.6 L687.0 554.3 L687.5 554.8 L688.0 554.2 L688.5 554.5 L689.0 554.5 L689.5 554.4 L690.0 554.3 L690.5 554.8 L691.0 554.3 L691.5 554.6 L692.0 554.9 L692.5 554.4 L693.0 554.4 L693.5 554.7 L694.0 554.7 L694.5 554.8 L695.0 554.9 L695.5 554.5 L696.0 554.6 L696.5 554.6 L697.0 554.5 L697.5 555.1 L698.0 555.0 L698.5 555.0 L699.0 554.5 L699.5 555.1 L700.0 555.0 L700.5 554.9 L701.0 555.1 L701.5 554.9 L702.0 554.7 L702.5 554.7 L703.0 554.8 L703.5 554.7 L704.0 554.9 L704.5 555.2 L705.0 555.2 L705.5 555.3 L706.0 555.2 L706.5 554.9 L707.0 555.1 L707.5 555.0 L708.0 555.3 L708.5 555.1 L709.0 554.9 L709.5 555.2 L710.0 555.4 L710.5 554.9 L711.0 555.4 L711.5 554.8 L712.0 555.0 L712.5 555.0 L713.0 555.3 L713.5 555.5 L714.0 555.4 L714.5 555.1 L715.0 555.5 L715.5 555.1 L716.0 555.0 L716.5 555.5 L717.0 555.3 L717.5 555.4 L718.0 555.4 L718.5 555.6 L719.0 555.3 L719.5 555.5 L720.0 555.4 L720.5 555.6 L721.0 555.3 L721.5 555.5 L722.0 555.4 L722.5 555.2 L723.0 555.1 L723.5 555.4 L724.0 555.1 L724.5 555.7 L725.0 555.1 L725.5 555.1 L726.0 555.1 L726.5 555.7 L727.0 555.3 L727.5 555.2 L728.0 555.1 L728.5 555.1 L729.0 555.6 L729.5 555.6 L730.0 555.6 L730.5 555.6 L731.0 555.2 L731.5 555.6 L732.0 555.4 L732.5 555.7 L733.0 555.8 L733.5 555.8 L734.0 555.2 L734.5 555.8 L735.0 555.9 L735.5 555.9 L736.0 555.3 L736.5 555.4 L737.0 555.3 L737.5 555.3 L738.0 555.8 L738.5 555.8 L739.0 555.7 L739.5 555.8 L740.0 555.7 L740.5 555.5 L741.0 555.3 L741.5 555.3 L742.0 555.8 L742.5 555.4 L743.0 555.5 L743.5 555.5 L744.0 555.3 L744.5 555.4 L745.0 555.4 L745.5 555.8 L746.0 555.5 L746.5 555.5 L747.0 555.9 L747.5 555.6 L748.0 555.8 L748.5 555.7 L749.0 555.3 L749.5 555.5 L750.0 555.6 L750.5 555.8 L751.0 555.5 L751.5 555.7 L752.0 555.6 L752.5 555.4 L753.0 555.9 L753.5 555.3 L754.0 555.8 L754.5 555.4 L755.0 555.3 L755.5 555.4 L756.0 555.8 L756.5 555.9 L757.0 555.3 L757.5 555.6 L758.0 555.6 L758.5 555.8 L759.0 555.4 L759.5 555.6 L760.0 555.5 L760.5 555.9 L761.0 555.6 L761.5 556.2 L762.0 555.8 L762.5 555.9 L763.0 556.3 L763.5 556.2 L764.0 556.0 L764.5 556.3 L765.0 556.0 L765.5 556.5 L766.0 556.4 L766.5 556.5 L767.0 556.4 L767.5 556.2 L768.0 556.3 L768.5 556.3 L769.0 556.6 L769.5 556.1 L769.5 562.5 Z" fill="#b0ffff"/>
<path d="M380.6 523.8 L381.2 506.5 L381.8 506.5 L382.4 523.8 Z" fill="#b0ffff"/>
<path d="M387.6 527.7 L388.2 516.0 L388.6 516.0 L389.2 527.7 Z" fill="#b0ffff"/>
<path d="M390.4 528.8 L391.0 457.0 L391.8 457.0 L392.4 528.8 Z" fill="#b0ffff"/>
<path d="M398.6 528.6 L399.2 518.0 L399.6 518.0 L400.2 528.6 Z" fill="#b0ffff"/>
<path d="M402 528 L404.5 515 L406 497 L406.45 425 L407.75 425 L408.2 497 L409.5 507 L412 515 Z" fill="#b0ffff"/>
<path d="M421.7 518.9 L422.2 469.0 L423.0 469.0 L423.6 518.9 Z" fill="#b0ffff"/>
<path d="M436 524 L437.5 505 L437.8 457 L439.0 457 L439.3 505 L441 522 Z" fill="#b0ffff"/>
<path d="M453.4 526.8 L453.9 507.5 L454.4 507.5 L455.0 526.8 Z" fill="#b0ffff"/>
<rect x="386" y="416" width="30" height="160" fill="#000" opacity="0.08"/>
<g fill="none" stroke="#fff" stroke-width="1.2" opacity="0.16"><rect x="390.5" y="420.5" width="23" height="23" rx="3.5"/><rect x="390.5" y="452.5" width="23" height="23" rx="3.5"/><rect x="390.5" y="484.5" width="23" height="23" rx="3.5"/><rect x="390.5" y="516.5" width="23" height="23" rx="3.5"/><rect x="390.5" y="548.5" width="23" height="23" rx="3.5"/><path d="M395 431 L399 436 L405 424 M410 426 V427 M410 431 V432 M410 436 V437 M398 439 H399"/><path d="M395 456 V471 H409 M396 460 L399 457 L403 460 L406 457 L409 459"/><path d="M402 489 V503 M395 496 H409" stroke-width="2"/><path d="M395 528 H409" stroke-width="2"/><path d="M396 556 L400 560 L396 564 Z M408 556 L404 560 L408 564 Z M402 552 V554 M402 559 V561 M402 566 V568"/></g>
</svg>
<svg class="abs" style="left:312.6px;top:151.4px" width="20" height="119.6" viewBox="0 0 20 119.6"><text id="ry1" transform="translate(14.4 119.6) rotate(-90)" font-family="'DejaVu Sans Condensed', 'DejaVu Sans', sans-serif" font-size="12.3" fill="#fff" stroke="#fff" stroke-width="0.25" textLength="119.6" lengthAdjust="spacingAndGlyphs">Освещенность [лк]</text></svg>
<svg class="abs" style="left:316.2px;top:435.0px" width="20" height="96.2" viewBox="0 0 20 96.2"><text id="ry2" transform="translate(14.4 96.2) rotate(-90)" font-family="'DejaVu Sans Condensed', 'DejaVu Sans', sans-serif" font-size="12.3" fill="#fff" stroke="#fff" stroke-width="0.25" textLength="96.2" lengthAdjust="spacingAndGlyphs">Амплитуда [дБ]</text></svg>

<span class="t" id="title_0" style="left:28.00px;top:9.00px;font:400 12.40px/14px 'Liberation Sans', sans-serif;color:#000;transform:scaleX(0.9314)">RadexLight</span>
<span class="t" id="title_1" style="left:90.20px;top:9.00px;font:400 12.40px/14px 'Liberation Sans', sans-serif;color:#000;transform:scaleX(0.8912)">1.16.4</span>
<span class="t" id="title_2" style="left:125.00px;top:9.00px;font:400 12.40px/14px 'Liberation Sans', sans-serif;color:#000;transform:scaleX(0.8539)">[RADEX</span>
<span class="t" id="title_3" style="left:167.00px;top:9.00px;font:400 12.40px/14px 'Liberation Sans', sans-serif;color:#000;transform:scaleX(0.9076)">LUPIN:</span>
<span class="t" id="title_4" style="left:205.57px;top:9.00px;font:400 12.40px/14px 'Liberation Sans', sans-serif;color:#000;transform:scaleX(0.9662)">2019-01-31</span>
<span class="t" id="title_5" style="left:270.77px;top:9.00px;font:400 12.40px/14px 'Liberation Sans', sans-serif;color:#000;transform:scaleX(0.9485)">2662]</span>
<span class="t" id="lang" style="left:603.93px;top:41.00px;font:400 16.30px/18px 'Liberation Sans', sans-serif;color:#fff;transform:scaleX(0.9795)">Русский</span>
<span class="t" id="h1" style="left:6.40px;top:76.00px;font:400 17.40px/20px 'Liberation Sans', sans-serif;color:#c8c8c8;transform:scaleX(0.9904)">Подключенное устройство</span>
<span class="t" id="dev_0" style="left:31.40px;top:114.00px;font:700 14.20px/16px 'Liberation Sans', sans-serif;color:#fff;transform:scaleX(0.9548)">RADEX</span>
<span class="t" id="dev_1" style="left:82.20px;top:114.00px;font:700 14.20px/16px 'Liberation Sans', sans-serif;color:#fff;transform:scaleX(0.9520)">LUPIN:</span>
<span class="t" id="dev_2" style="left:131.18px;top:114.00px;font:700 14.20px/16px 'Liberation Sans', sans-serif;color:#fff;transform:scaleX(1.0272)">2019-01-31</span>
<span class="t" id="dev_3" style="left:211.26px;top:114.00px;font:700 14.20px/16px 'Liberation Sans', sans-serif;color:#fff;transform:scaleX(0.9396)">2662</span>
<span class="t" id="h2" style="left:7.27px;top:152.00px;font:400 17.40px/20px 'Liberation Sans', sans-serif;color:#c8c8c8;transform:scaleX(0.9855)">Значение</span>
<span class="t" id="lux_0" style="left:31.91px;top:193.00px;font:700 14.20px/16px 'Liberation Sans', sans-serif;color:#fff;transform:scaleX(1.0983)">Освещенность:</span>
<span class="t" id="lux_1" style="left:155.29px;top:193.00px;font:700 14.20px/16px 'Liberation Sans', sans-serif;color:#fff;transform:scaleX(1.0814)">57.3</span>
<span class="t" id="lux_2" style="left:190.60px;top:193.00px;font:700 14.20px/16px 'Liberation Sans', sans-serif;color:#fff;transform:scaleX(1.1528)">лк</span>
<span class="t" id="h3" style="left:6.40px;top:258.00px;font:400 17.40px/20px 'Liberation Sans', sans-serif;color:#c8c8c8;transform:scaleX(0.9675)">Пульсация</span>
<span class="t" id="kp" style="left:7.10px;top:288.00px;font:700 14.20px/16px 'Liberation Sans', sans-serif;color:#fff;transform:scaleX(1.2689)">К<span style="font-size:11.6px;position:relative;top:3.4px">п</span>:</span>
<span class="t" id="pct_0" style="left:130.70px;top:298.00px;font:700 14.20px/16px 'Liberation Sans', sans-serif;color:#fff;transform:scaleX(1.1871)">110</span>
<span class="t" id="pct_1" style="left:162.19px;top:298.00px;font:700 14.20px/16px 'Liberation Sans', sans-serif;color:#fff;transform:scaleX(1.0916)">%</span>
<span class="t" id="freq_0" style="left:57.07px;top:372.00px;font:700 14.20px/16px 'Liberation Sans', sans-serif;color:#fff;transform:scaleX(1.0599)">Частоты:</span>
<span class="t" id="freq_1" style="left:131.50px;top:372.00px;font:700 14.20px/16px 'Liberation Sans', sans-serif;color:#fff;transform:scaleX(1.1293)">120;</span>
<span class="t" id="freq_2" style="left:167.79px;top:372.00px;font:700 14.20px/16px 'Liberation Sans', sans-serif;color:#fff;transform:scaleX(1.1194)">240;</span>
<span class="t" id="freq_3" style="left:204.30px;top:372.00px;font:700 14.20px/16px 'Liberation Sans', sans-serif;color:#fff;transform:scaleX(1.0973)">480</span>
<span class="t" id="freq_4" style="left:236.39px;top:372.00px;font:700 14.20px/16px 'Liberation Sans', sans-serif;color:#fff;transform:scaleX(1.0462)">[Гц]</span>
<span class="t" id="h4" style="left:6.31px;top:408.00px;font:400 17.40px/20px 'Liberation Sans', sans-serif;color:#c8c8c8;transform:scaleX(1.0008)">Комментарии</span>
<span class="t c" id="c1t" style="left:496.67px;top:84.00px;font:400 12.30px/14px 'DejaVu Sans Condensed', 'DejaVu Sans', sans-serif;color:#fff;transform:scaleX(1.0493)">Осциллограмма</span>
<span class="t c" id="y1_0" style="left:337.75px;top:109.00px;font:400 12.30px/14px 'DejaVu Sans Condensed', 'DejaVu Sans', sans-serif;color:#fff;transform:scaleX(1.1200)">112,51</span>
<span class="t c" id="y1_1" style="left:337.75px;top:129.00px;font:400 12.30px/14px 'DejaVu Sans Condensed', 'DejaVu Sans', sans-serif;color:#fff;transform:scaleX(1.1200)">101,26</span>
<span class="t c" id="y1_2" style="left:345.63px;top:149.00px;font:400 12.30px/14px 'DejaVu Sans Condensed', 'DejaVu Sans', sans-serif;color:#fff;transform:scaleX(1.1200)">90,01</span>
<span class="t c" id="y1_3" style="left:345.63px;top:168.00px;font:400 12.30px/14px 'DejaVu Sans Condensed', 'DejaVu Sans', sans-serif;color:#fff;transform:scaleX(1.1200)">78,76</span>
<span class="t c" id="y1_4" style="left:345.63px;top:188.00px;font:400 12.30px/14px 'DejaVu Sans Condensed', 'DejaVu Sans', sans-serif;color:#fff;transform:scaleX(1.1200)">67,51</span>
<span class="t c" id="y1_5" style="left:345.63px;top:208.00px;font:400 12.30px/14px 'DejaVu Sans Condensed', 'DejaVu Sans', sans-serif;color:#fff;transform:scaleX(1.1200)">56,25</span>
<span class="t c" id="y1_6" style="left:353.51px;top:227.00px;font:400 12.30px/14px 'DejaVu Sans Condensed', 'DejaVu Sans', sans-serif;color:#fff;transform:scaleX(1.1200)">45,0</span>
<span class="t c" id="y1_7" style="left:345.63px;top:247.00px;font:400 12.30px/14px 'DejaVu Sans Condensed', 'DejaVu Sans', sans-serif;color:#fff;transform:scaleX(1.1200)">33,75</span>
<span class="t c" id="y1_8" style="left:353.51px;top:267.00px;font:400 12.30px/14px 'DejaVu Sans Condensed', 'DejaVu Sans', sans-serif;color:#fff;transform:scaleX(1.1200)">22,5</span>
<span class="t c" id="y1_9" style="left:345.63px;top:286.00px;font:400 12.30px/14px 'DejaVu Sans Condensed', 'DejaVu Sans', sans-serif;color:#fff;transform:scaleX(1.1200)">11,25</span>
<span class="t c" id="y1_10" style="left:361.40px;top:306.00px;font:400 12.30px/14px 'DejaVu Sans Condensed', 'DejaVu Sans', sans-serif;color:#fff;transform:scaleX(1.1200)">0,0</span>
<span class="t c" id="x1_0" style="left:376.81px;top:331.00px;font:400 12.30px/14px 'DejaVu Sans Condensed', 'DejaVu Sans', sans-serif;color:#fff;transform:scaleX(1.1200)">0.00</span>
<span class="t c" id="x1_1" style="left:452.71px;top:331.00px;font:400 12.30px/14px 'DejaVu Sans Condensed', 'DejaVu Sans', sans-serif;color:#fff;transform:scaleX(1.1200)">0.20</span>
<span class="t c" id="x1_2" style="left:528.61px;top:331.00px;font:400 12.30px/14px 'DejaVu Sans Condensed', 'DejaVu Sans', sans-serif;color:#fff;transform:scaleX(1.1200)">0.40</span>
<span class="t c" id="x1_3" style="left:606.56px;top:331.00px;font:400 12.30px/14px 'DejaVu Sans Condensed', 'DejaVu Sans', sans-serif;color:#fff;transform:scaleX(1.1200)">0.60</span>
<span class="t c" id="x1_4" style="left:682.31px;top:331.00px;font:400 12.30px/14px 'DejaVu Sans Condensed', 'DejaVu Sans', sans-serif;color:#fff;transform:scaleX(1.1200)">0.80</span>
<span class="t c" id="x1_5" style="left:759.06px;top:331.00px;font:400 12.30px/14px 'DejaVu Sans Condensed', 'DejaVu Sans', sans-serif;color:#fff;transform:scaleX(1.1200)">1.00</span>
<span class="t c" id="c1x" style="left:549.00px;top:345.00px;font:400 12.30px/14px 'DejaVu Sans Condensed', 'DejaVu Sans', sans-serif;color:#fff;transform:scaleX(1.1132)">Время [с]</span>
<span class="t c" id="c2t" style="left:524.50px;top:387.00px;font:400 12.30px/14px 'DejaVu Sans Condensed', 'DejaVu Sans', sans-serif;color:#fff;transform:scaleX(1.0409)">Спектр</span>
<span class="t c" id="y2_0" style="left:358.02px;top:400.00px;font:400 12.30px/14px 'DejaVu Sans Condensed', 'DejaVu Sans', sans-serif;color:#fff;transform:scaleX(1.1200)">0</span>
<span class="t c" id="y2_1" style="left:345.66px;top:431.00px;font:400 12.30px/14px 'DejaVu Sans Condensed', 'DejaVu Sans', sans-serif;color:#fff;transform:scaleX(1.1200)">-20</span>
<span class="t c" id="y2_2" style="left:345.66px;top:463.00px;font:400 12.30px/14px 'DejaVu Sans Condensed', 'DejaVu Sans', sans-serif;color:#fff;transform:scaleX(1.1200)">-40</span>
<span class="t c" id="y2_3" style="left:345.66px;top:494.00px;font:400 12.30px/14px 'DejaVu Sans Condensed', 'DejaVu Sans', sans-serif;color:#fff;transform:scaleX(1.1200)">-60</span>
<span class="t c" id="y2_4" style="left:345.66px;top:525.00px;font:400 12.30px/14px 'DejaVu Sans Condensed', 'DejaVu Sans', sans-serif;color:#fff;transform:scaleX(1.1200)">-80</span>
<span class="t c" id="y2_5" style="left:337.78px;top:557.00px;font:400 12.30px/14px 'DejaVu Sans Condensed', 'DejaVu Sans', sans-serif;color:#fff;transform:scaleX(1.1200)">-100</span>
<span class="t c" id="x2_0" style="left:371.06px;top:572.00px;font:400 12.30px/14px 'DejaVu Sans Condensed', 'DejaVu Sans', sans-serif;color:#fff;transform:scaleX(1.1200)">0</span>
<span class="t c" id="x2_1" style="left:430.67px;top:572.00px;font:400 12.30px/14px 'DejaVu Sans Condensed', 'DejaVu Sans', sans-serif;color:#fff;transform:scaleX(1.1200)">500</span>
<span class="t c" id="x2_2" style="left:492.73px;top:572.00px;font:400 12.30px/14px 'DejaVu Sans Condensed', 'DejaVu Sans', sans-serif;color:#fff;transform:scaleX(1.1200)">1000</span>
<span class="t c" id="x2_3" style="left:558.73px;top:572.00px;font:400 12.30px/14px 'DejaVu Sans Condensed', 'DejaVu Sans', sans-serif;color:#fff;transform:scaleX(1.1200)">1500</span>
<span class="t c" id="x2_4" style="left:624.48px;top:572.00px;font:400 12.30px/14px 'DejaVu Sans Condensed', 'DejaVu Sans', sans-serif;color:#fff;transform:scaleX(1.1200)">2000</span>
<span class="t c" id="x2_5" style="left:690.03px;top:572.00px;font:400 12.30px/14px 'DejaVu Sans Condensed', 'DejaVu Sans', sans-serif;color:#fff;transform:scaleX(1.1200)">2500</span>
<span class="t c" id="x2_6" style="left:755.88px;top:572.00px;font:400 12.30px/14px 'DejaVu Sans Condensed', 'DejaVu Sans', sans-serif;color:#fff;transform:scaleX(1.1200)">3000</span>
<span class="t c" id="c2x" style="left:533.00px;top:585.00px;font:400 12.30px/14px 'DejaVu Sans Condensed', 'DejaVu Sans', sans-serif;color:#fff;transform:scaleX(1.0840)">Частота [Гц]</span>

<div id="status">
<div class="dot" style="left:790px;top:5px"></div>
<div class="dot" style="left:786px;top:9px"></div><div class="dot" style="left:790px;top:9px"></div>
<div class="dot" style="left:782px;top:13px"></div><div class="dot" style="left:786px;top:13px"></div><div class="dot" style="left:790px;top:13px"></div>
</div>

</div></div>
</body>
</html>
